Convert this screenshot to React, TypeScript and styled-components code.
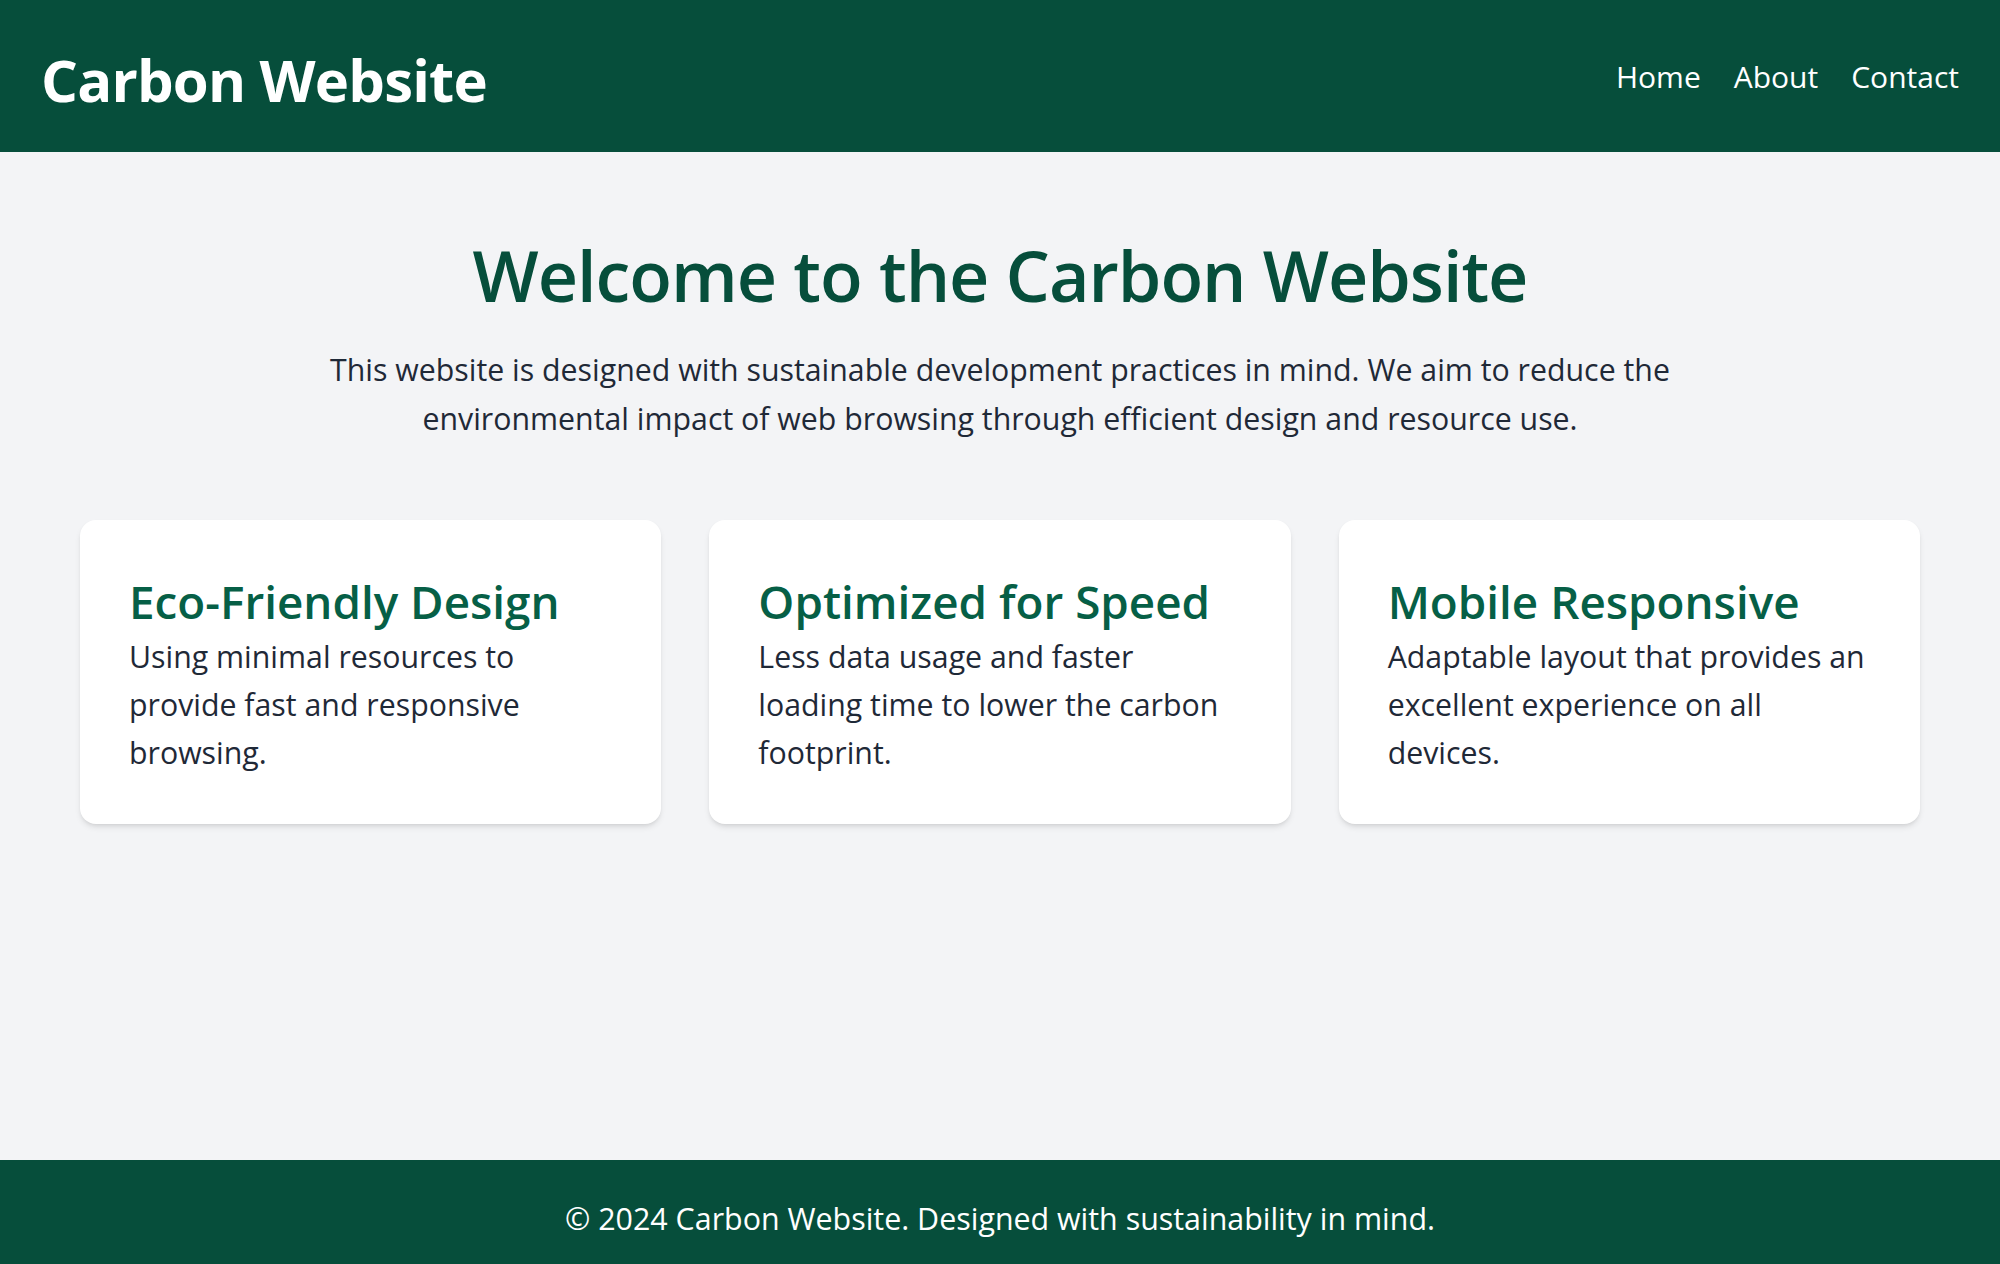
import React from "react";
import styled, { createGlobalStyle } from "styled-components";

const Global = createGlobalStyle`
  html, body { margin: 0; padding: 0; }
  body { font-family: "Open Sans", "Noto Sans", sans-serif; background: #f3f4f6; color: #1f2937; }
  * { box-sizing: border-box; }
`;

const Page = styled.div`
  min-height: 100vh;
  display: flex;
  flex-direction: column;
`;

const Header = styled.header`
  height: 152px;
  background: #064e3b;
  color: #ffffff;
  display: flex;
  align-items: center;
  justify-content: space-between;
  padding: 6px 41px 0;
`;

const Logo = styled.h1`
  margin: 0;
  font-size: 58px;
  font-weight: 700;
  letter-spacing: -0.8px;
`;

const Nav = styled.nav`
  display: flex;
  gap: 33px;
  padding-bottom: 6px;
`;

const NavLink = styled.a`
  color: #ffffff;
  text-decoration: none;
  font-size: 30px;
`;

const Main = styled.main`
  flex: 1;
  padding: 81px 80px 60px;
`;

const Hero = styled.section`
  display: flex;
  flex-direction: column;
  align-items: center;
  text-align: center;
`;

const Title = styled.h2`
  margin: 0;
  font-size: 70px;
  font-weight: 600;
  letter-spacing: -1px;
  color: #064e3b;
  line-height: 84px;
`;

const Lead = styled.p`
  margin: 29px 0 0;
  max-width: 1380px;
  font-size: 30.3px;
  line-height: 48.5px;
`;

const Cards = styled.div`
  display: grid;
  grid-template-columns: repeat(3, 1fr);
  gap: 48px;
  margin-top: 77px;
`;

const Card = styled.article`
  background: #ffffff;
  border-radius: 16px;
  padding: 49px 50px 47px 49px;
  box-shadow: 0 4px 6px -1px rgba(0, 0, 0, 0.1), 0 2px 4px -2px rgba(0, 0, 0, 0.1);
`;

const CardTitle = styled.h3`
  margin: 0;
  font-size: 45.8px;
  font-weight: 600;
  color: #065f46;
  line-height: 64px;
`;

const CardText = styled.p`
  margin: 0;
  font-size: 30.3px;
  line-height: 48px;
`;

const Footer = styled.footer`
  background: #064e3b;
  color: #ffffff;
  text-align: center;
  padding: 35px 0 21px;
  font-size: 30.4px;
  line-height: 48px;
`;

const footerText = "© 2024 Carbon Website. Designed with sustainability in mind.";

const cards = [
  { title: "Eco-Friendly Design", text: "Using minimal resources to provide fast and responsive browsing." },
  { title: "Optimized for Speed", text: "Less data usage and faster loading time to lower the carbon footprint." },
  { title: "Mobile Responsive", text: "Adaptable layout that provides an excellent experience on all devices." },
];

export default function App() {
  return (
    <>
      <Global />
      <Page>
        <Header>
          <Logo>Carbon Website</Logo>
          <Nav>
            <NavLink href="#">Home</NavLink>
            <NavLink href="#">About</NavLink>
            <NavLink href="#">Contact</NavLink>
          </Nav>
        </Header>
        <Main>
          <Hero>
            <Title>Welcome to the Carbon Website</Title>
            <Lead>
              This website is designed with sustainable development practices in mind. We aim to reduce the
              environmental impact of web browsing through efficient design and resource use.
            </Lead>
          </Hero>
          <Cards>
            {cards.map((c) => (
              <Card key={c.title}>
                <CardTitle>{c.title}</CardTitle>
                <CardText>{c.text}</CardText>
              </Card>
            ))}
          </Cards>
        </Main>
        <Footer>{footerText}</Footer>
      </Page>
    </>
  );
}
